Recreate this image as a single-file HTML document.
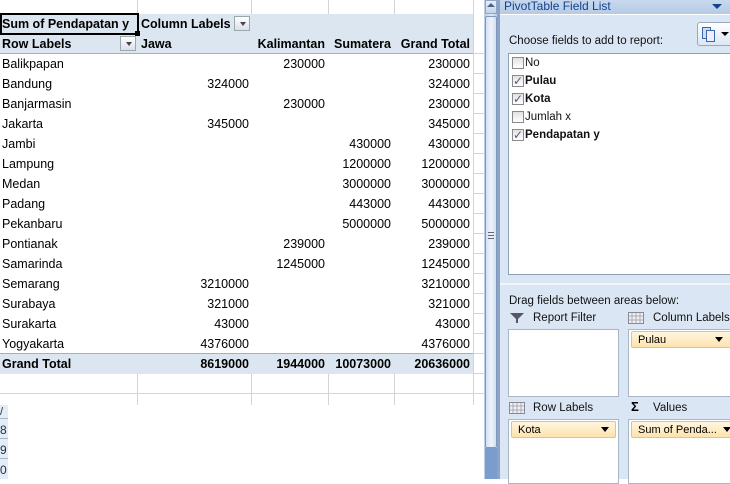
<!DOCTYPE html>
<html><head><meta charset="utf-8"><style>
*{margin:0;padding:0;box-sizing:border-box}
body{width:730px;height:479px;overflow:hidden;background:#fff;position:relative;font-family:"Liberation Sans",sans-serif}
.a{position:absolute;white-space:nowrap}
.c{font-size:12.5px;color:#000;height:20px;line-height:21px}
.r{text-align:right}
.vl{position:absolute;width:1px;background:#d4d4d4}
.hl{position:absolute;height:1px;background:#d4d4d4}
.p{font-family:"Liberation Sans",sans-serif;font-size:11px;color:#111}
.cb{position:absolute;width:12px;height:12px;border:1px solid #8a8a8a;background:linear-gradient(#e2e2e2,#fff)}
.box{position:absolute;background:#fff;border:1px solid #a9b6c6}
.chip{position:absolute;height:17px;border:1px solid #e8c27a;border-radius:2px;background:linear-gradient(#fff6e0,#fde3ad);font-size:11px;line-height:16px;padding-left:6px}
.dd{position:absolute;right:6px;top:5px;width:0;height:0;border-left:4px solid transparent;border-right:4px solid transparent;border-top:5px solid #000}
</style></head><body>
<div class="vl" style="left:137px;top:0;height:14px"></div>
<div class="vl" style="left:251px;top:0;height:14px"></div>
<div class="vl" style="left:328px;top:0;height:14px"></div>
<div class="vl" style="left:394px;top:0;height:14px"></div>
<div class="vl" style="left:473px;top:0;height:405px"></div>
<div class="vl" style="left:137px;top:374px;height:31px"></div>
<div class="vl" style="left:251px;top:374px;height:31px"></div>
<div class="vl" style="left:328px;top:374px;height:31px"></div>
<div class="vl" style="left:394px;top:374px;height:31px"></div>
<div class="hl" style="left:0;top:393px;width:484px"></div>
<div class="hl" style="left:473px;top:53px;width:11px"></div>
<div class="hl" style="left:473px;top:73px;width:11px"></div>
<div class="hl" style="left:473px;top:93px;width:11px"></div>
<div class="hl" style="left:473px;top:113px;width:11px"></div>
<div class="hl" style="left:473px;top:133px;width:11px"></div>
<div class="hl" style="left:473px;top:153px;width:11px"></div>
<div class="hl" style="left:473px;top:173px;width:11px"></div>
<div class="hl" style="left:473px;top:193px;width:11px"></div>
<div class="hl" style="left:473px;top:213px;width:11px"></div>
<div class="hl" style="left:473px;top:233px;width:11px"></div>
<div class="hl" style="left:473px;top:253px;width:11px"></div>
<div class="hl" style="left:473px;top:273px;width:11px"></div>
<div class="hl" style="left:473px;top:293px;width:11px"></div>
<div class="hl" style="left:473px;top:313px;width:11px"></div>
<div class="hl" style="left:473px;top:333px;width:11px"></div>
<div class="hl" style="left:473px;top:353px;width:11px"></div>
<div class="hl" style="left:473px;top:373px;width:11px"></div>
<div class="a" style="left:0;top:14px;width:473px;height:40px;background:#dce6f1"></div>
<div class="a" style="left:0;top:53px;width:473px;height:1px;background:#95b3d7"></div>
<div class="a" style="left:0;top:13px;width:139px;height:22px;border:2px solid #000"></div>
<div class="a" style="left:135px;top:31px;width:5px;height:5px;background:#000"></div>
<div class="a c" style="left:2px;top:14px;font-weight:bold">Sum of Pendapatan y</div>
<div class="a c" style="left:141px;top:14px;font-weight:bold">Column Labels</div>
<div class="a" style="left:234px;top:16px;width:16px;height:15px;border:1px solid #9aa;background:linear-gradient(#fff,#dde)"><div class="dd" style="right:3px;top:5px;border-width:4px 3px 0;border-top-color:#444"></div></div>
<div class="a c" style="left:2px;top:34px;font-weight:bold">Row Labels</div>
<div class="a" style="left:120px;top:36px;width:16px;height:15px;border:1px solid #9aa;background:linear-gradient(#fff,#dde)"><div class="dd" style="right:3px;top:5px;border-width:4px 3px 0;border-top-color:#444"></div></div>
<div class="a c" style="left:141px;top:34px;font-weight:bold">Jawa</div>
<div class="a c r" style="left:251px;width:74px;top:34px;font-weight:bold">Kalimantan</div>
<div class="a c r" style="left:328px;width:63px;top:34px;font-weight:bold">Sumatera</div>
<div class="a c r" style="left:394px;width:76px;top:34px;font-weight:bold">Grand Total</div>
<div class="a" style="left:2px;top:54px;width:471px">
<div class="c" style="position:relative">Balikpapan<span class="a" style="left:249px;width:74px;text-align:right">230000</span><span class="a" style="left:392px;width:76px;text-align:right">230000</span></div>
<div class="c" style="position:relative">Bandung<span class="a" style="left:135px;width:112px;text-align:right">324000</span><span class="a" style="left:392px;width:76px;text-align:right">324000</span></div>
<div class="c" style="position:relative">Banjarmasin<span class="a" style="left:249px;width:74px;text-align:right">230000</span><span class="a" style="left:392px;width:76px;text-align:right">230000</span></div>
<div class="c" style="position:relative">Jakarta<span class="a" style="left:135px;width:112px;text-align:right">345000</span><span class="a" style="left:392px;width:76px;text-align:right">345000</span></div>
<div class="c" style="position:relative">Jambi<span class="a" style="left:326px;width:63px;text-align:right">430000</span><span class="a" style="left:392px;width:76px;text-align:right">430000</span></div>
<div class="c" style="position:relative">Lampung<span class="a" style="left:326px;width:63px;text-align:right">1200000</span><span class="a" style="left:392px;width:76px;text-align:right">1200000</span></div>
<div class="c" style="position:relative">Medan<span class="a" style="left:326px;width:63px;text-align:right">3000000</span><span class="a" style="left:392px;width:76px;text-align:right">3000000</span></div>
<div class="c" style="position:relative">Padang<span class="a" style="left:326px;width:63px;text-align:right">443000</span><span class="a" style="left:392px;width:76px;text-align:right">443000</span></div>
<div class="c" style="position:relative">Pekanbaru<span class="a" style="left:326px;width:63px;text-align:right">5000000</span><span class="a" style="left:392px;width:76px;text-align:right">5000000</span></div>
<div class="c" style="position:relative">Pontianak<span class="a" style="left:249px;width:74px;text-align:right">239000</span><span class="a" style="left:392px;width:76px;text-align:right">239000</span></div>
<div class="c" style="position:relative">Samarinda<span class="a" style="left:249px;width:74px;text-align:right">1245000</span><span class="a" style="left:392px;width:76px;text-align:right">1245000</span></div>
<div class="c" style="position:relative">Semarang<span class="a" style="left:135px;width:112px;text-align:right">3210000</span><span class="a" style="left:392px;width:76px;text-align:right">3210000</span></div>
<div class="c" style="position:relative">Surabaya<span class="a" style="left:135px;width:112px;text-align:right">321000</span><span class="a" style="left:392px;width:76px;text-align:right">321000</span></div>
<div class="c" style="position:relative">Surakarta<span class="a" style="left:135px;width:112px;text-align:right">43000</span><span class="a" style="left:392px;width:76px;text-align:right">43000</span></div>
<div class="c" style="position:relative">Yogyakarta<span class="a" style="left:135px;width:112px;text-align:right">4376000</span><span class="a" style="left:392px;width:76px;text-align:right">4376000</span></div>
</div>
<div class="a" style="left:0;top:353px;width:473px;height:21px;background:#dce6f1;border-top:1px solid #95b3d7"></div>
<div class="a c" style="left:0;top:354px;width:473px;font-weight:bold;padding-left:2px">Grand Total<span class="a" style="left:137px;width:112px;text-align:right">8619000</span><span class="a" style="left:251px;width:74px;text-align:right">1944000</span><span class="a" style="left:328px;width:63px;text-align:right">10073000</span><span class="a" style="left:394px;width:76px;text-align:right">20636000</span></div>
<div class="a" style="left:0;top:405px;width:8px;height:74px;background:#e4ecf7"></div>
<div class="a" style="left:0;top:405px;font-size:11px;line-height:14px;color:#234">/</div>
<div class="a" style="left:0;top:420px;font-size:12px;line-height:20px;color:#234">8</div>
<div class="a" style="left:0;top:440px;font-size:12px;line-height:20px;color:#234">9</div>
<div class="a" style="left:0;top:460px;font-size:12px;line-height:20px;color:#234">0</div>
<div class="hl" style="left:0;top:418px;width:8px;background:#9eb6ce"></div>
<div class="hl" style="left:0;top:438px;width:8px;background:#9eb6ce"></div>
<div class="hl" style="left:0;top:458px;width:8px;background:#9eb6ce"></div>
<div class="a" style="left:484px;top:0;width:14px;height:479px;background:linear-gradient(90deg,#b9cbe3,#dfe8f5 50%,#b9cbe3)"></div>
<div class="a" style="left:485px;top:0;width:12px;height:14px;background:linear-gradient(#e5eef9,#c3d4ea);border:1px solid #8ea6c6"></div>
<div class="a" style="left:487px;top:3px;width:0;height:0;border-left:4px solid transparent;border-right:4px solid transparent;border-bottom:4px solid #4d6185"></div>
<div class="a" style="left:485px;top:16px;width:12px;height:432px;background:linear-gradient(90deg,#d3e0f1,#eef3fa 50%,#d3e0f1);border:1px solid #7f97bb;border-radius:2px"></div>
<div class="a" style="left:488px;top:232px;width:6px;height:7px;border-top:1px solid #667;border-bottom:1px solid #667"></div>
<div class="a" style="left:488px;top:235px;width:6px;height:1px;background:#667"></div>
<div class="a" style="left:485px;top:448px;width:12px;height:31px;background:#7c9ccc"></div>
<div class="a" style="left:497px;top:0;width:3px;height:479px;background:#8aa3c7"></div>
<div class="a" style="left:500px;top:0;width:230px;height:479px;background:#dbe6f4"></div>
<div class="a" style="left:500px;top:0;width:230px;height:14px;background:linear-gradient(#c7d8ee,#b6cbe6)"></div>
<div class="a p" style="left:504px;top:-1px;font-size:12px;color:#15428b">PivotTable Field List</div>
<div class="a" style="left:712px;top:4px;width:0;height:0;border-left:5px solid transparent;border-right:5px solid transparent;border-top:5px solid #15428b"></div>
<div class="a" style="left:500px;top:14px;width:230px;height:1px;background:#fff"></div>
<div class="a p" style="left:509px;top:35px;font-size:11.5px">Choose fields to add to report:</div>
<div class="a" style="left:697px;top:22px;width:40px;height:24px;border:1px solid #98a8c0;border-radius:3px;background:linear-gradient(#fff,#dde6f2)"></div>
<div class="a" style="left:702px;top:27px;width:9px;height:12px;border:1px solid #3a6aa8;background:#cde"></div>
<div class="a" style="left:706px;top:30px;width:9px;height:12px;border:1px solid #3a6aa8;background:#eef"></div>
<div class="a" style="left:721px;top:32px;width:0;height:0;border-left:4px solid transparent;border-right:4px solid transparent;border-top:4px solid #000"></div>
<div class="box" style="left:508px;top:53px;width:225px;height:222px;border-color:#8fa0b8"></div>
<div class="cb" style="left:512px;top:57px"></div><div class="a p" style="left:525px;top:57px;font-size:11.5px">No</div>
<div class="cb" style="left:512px;top:75px"></div><div class="a p" style="left:513px;top:74px;font-size:12px;color:#4a5d80">✓</div><div class="a p" style="left:525px;top:75px;font-size:11.5px;font-weight:bold">Pulau</div>
<div class="cb" style="left:512px;top:93px"></div><div class="a p" style="left:513px;top:92px;font-size:12px;color:#4a5d80">✓</div><div class="a p" style="left:525px;top:93px;font-size:11.5px;font-weight:bold">Kota</div>
<div class="cb" style="left:512px;top:111px"></div><div class="a p" style="left:525px;top:111px;font-size:11.5px">Jumlah x</div>
<div class="cb" style="left:512px;top:129px"></div><div class="a p" style="left:513px;top:128px;font-size:12px;color:#4a5d80">✓</div><div class="a p" style="left:525px;top:129px;font-size:11.5px;font-weight:bold">Pendapatan y</div>
<div class="a" style="left:500px;top:283px;width:230px;height:2px;background:#f2f6fb"></div>
<div class="a p" style="left:509px;top:295px;font-size:11.5px">Drag fields between areas below:</div>
<svg class="a" style="left:509px;top:312px" width="16" height="12"><path d="M1 1H15L9 7V11H7V7Z" fill="#556" /></svg>
<div class="a p" style="left:533px;top:312px;font-size:11.5px">Report Filter</div>
<svg class="a" style="left:628px;top:312px" width="16" height="12"><rect x="0.5" y="0.5" width="15" height="11" fill="#f0f0f0" stroke="#889"/><path d="M4 1V11M8 1V11M12 1V11M1 4H15M1 8H15" stroke="#aab" /></svg>
<div class="a p" style="left:653px;top:312px;font-size:11.5px">Column Labels</div>
<div class="box" style="left:508px;top:329px;width:111px;height:68px"></div>
<div class="box" style="left:628px;top:329px;width:110px;height:68px"></div>
<div class="chip" style="left:631px;top:331px;width:105px">Pulau<div class="dd" style="right:12px"></div></div>
<svg class="a" style="left:509px;top:402px" width="16" height="12"><rect x="0.5" y="0.5" width="15" height="11" fill="#f0f0f0" stroke="#889"/><path d="M4 1V11M8 1V11M12 1V11M1 4H15M1 8H15" stroke="#aab" /></svg>
<div class="a p" style="left:533px;top:402px;font-size:11.5px">Row Labels</div>
<div class="a" style="left:631px;top:399px;font-size:13px;font-weight:bold">Σ</div>
<div class="a p" style="left:653px;top:402px;font-size:11.5px">Values</div>
<div class="box" style="left:508px;top:419px;width:111px;height:65px"></div>
<div class="box" style="left:628px;top:419px;width:110px;height:65px"></div>
<div class="chip" style="left:511px;top:421px;width:105px">Kota<div class="dd"></div></div>
<div class="chip" style="left:631px;top:421px;width:105px">Sum of Penda...<div class="dd" style="right:4px"></div></div>
</body></html>
